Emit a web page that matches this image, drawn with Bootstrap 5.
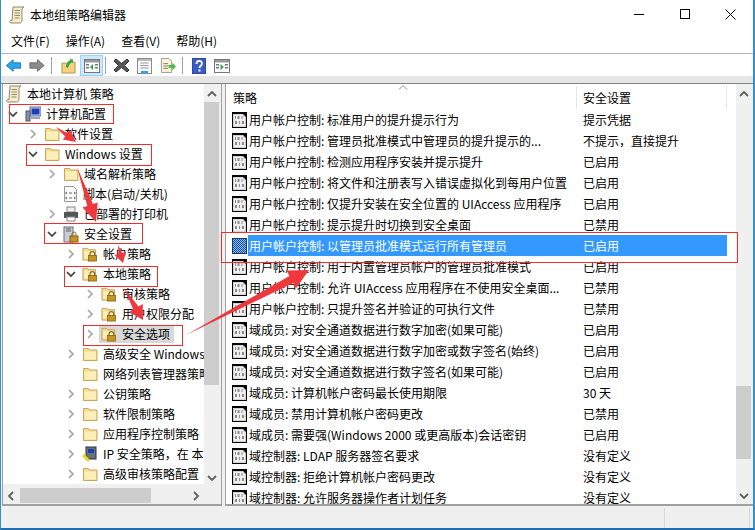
<!DOCTYPE html>
<html lang="zh">
<head>
<meta charset="utf-8">
<title>本地组策略编辑器</title>
<link href="https://cdn.jsdelivr.net/npm/bootstrap@5.3.0/dist/css/bootstrap.min.css" rel="stylesheet">
<style>
html,body{margin:0;height:530px;overflow:hidden;background:#fff}
body{font-family:"Noto Sans CJK SC","Liberation Sans",sans-serif;font-size:12px;line-height:1;color:#000}
.gw{width:755px;height:530px;border-left:1px solid #2c8fd8;border-right:2px solid #2c8fd8;border-bottom:2px solid #1f6fb0}
.gw-title{height:32px;padding:0 0 3px 8px;font-size:12px}
.gw-title .t{margin-left:5px}
.gw-ctrl{margin-left:auto;padding-right:17px;gap:34.500px}
.gw-menu{height:22px;padding:0 0 3px 10px;gap:16px;border-bottom:1px solid #b4b4c0}
.gw-tools{height:22px;padding:1px 0 0 4px}
.tm1{margin-left:1px}.tm2{margin-left:2px}.tm4{margin-left:4px}.tm6{margin-left:6px}.tm7{margin-left:7px}.tm8{margin-left:8px}.tm9{margin-left:9px}
.gw-band{height:8px;background:#e6e6e6;border-bottom:1px solid #808080}
.gw-sep{width:1px;height:17px;background:#a0a0a0}
.gw-on{background:#cce8ff;border:1px solid #99d1ff;width:23px;height:21px}
.gw-main{height:422px;gap:3px;padding:0 0 0 1px;background:#f0f0f0}
.pane-l{width:220px;flex:none;border:1px solid #a0a0a0;border-top:0;border-bottom:2px solid #a0a0a0;padding-right:1px}
.pane-r{width:528px;flex:none;border-left:1px solid #a0a0a0;border-bottom:2px solid #a0a0a0;padding-right:2px}
.tree-body{height:400px;flex:none;overflow:hidden}
.tree-scroll{width:201px;overflow:hidden;background:#fff}
.tree-row{height:20px;white-space:nowrap}
.tree-row svg{flex:none}
.lv0{padding-left:3px}.lv1{padding-left:5px}.lv2{padding-left:25px}.lv3{padding-left:44px}.lv4{padding-left:63px}.lv5{padding-left:82px}
.chev{width:10px;height:10px;flex:none;margin-right:6px}
.lv1 .chev{margin-right:7px}
.ico{margin-right:5px}
.nochev{width:16px;flex:none}
.sel{background:#d9d9d9;height:18px;padding:0 4px 0 2px;display:flex;align-items:center;margin-left:-2px}
.sb-v{width:15px;background:#f0f0f0;flex:none;padding-top:2px}
.sb-btn{height:16px;flex:none}
.sb-end{height:12px;flex:none}
.sb-track{flex:1 1 auto;min-height:0}
.sb-thumb{background:#cdcdcd}
.t2{height:283px}
.r-gap{height:284px}
.r-th{height:73px}
.sb-h{height:15px;background:#f0f0f0;margin:4px 0 1px 0;flex:none;width:201px}
.th1{width:131px;height:15px;background:#cdcdcd;margin-left:5px}
.list{width:510px;flex:none;background:#fff;overflow:hidden}
.lh{height:25px;position:relative}
.lh .c1{width:351px;padding-left:7px;border-right:1px solid #e5e5e5;height:23px;margin-top:2px}
.lh .c2{width:150px;padding-left:6px;border-right:1px solid #e5e5e5;height:23px;margin-top:2px}
.caret-up{position:absolute;left:172px;top:1px}
.lr{height:21.050px;white-space:nowrap}
.lr .c1{width:351px;padding-left:6px;overflow:hidden;flex:none}
.lr .c2{padding-left:6px;flex:none;width:150px}
.lr svg{flex:none;margin-right:2px}
.hit .c1 span{background:#3399ff;color:#fff;display:block;width:329px;line-height:21px;height:21px;padding-left:1px;margin-left:-1px}
.hit .c2{background:#3399ff;color:#fff;line-height:21px;height:21px}
.gw-status{height:22px;background:#f0f0f0}
.st-a{width:664px;border-right:1px solid #d8d8d8;height:20px;margin-top:2px}
.st-b{width:85px;border-right:1px solid #d8d8d8;height:20px;margin-top:2px}
.over{position:absolute;left:0;top:0;pointer-events:none}
</style>
</head>
<body>
<svg width="0" height="0" class="position-absolute">
<defs>
<pattern id="dith" width="2" height="2" patternUnits="userSpaceOnUse"><rect width="2" height="2" fill="#8dbdf0"/><rect width="1" height="1" fill="#1a4f98"/><rect x="1" y="1" width="1" height="1" fill="#1a4f98"/></pattern>
<symbol id="fld" viewBox="0 0 16 16"><path d="M1.500 2.500h5l1 1.500h7.500v10.500H1.500z" fill="#f6dd94" stroke="#c8a55a"/><path d="M2.500 5.500h11.500v8H2.500z" fill="#fcefb8"/></symbol>
<symbol id="lfld" viewBox="0 0 17 17"><path d="M1 2.500h5l1 1.500h7.500v11H1z" fill="#f6dd94" stroke="#c0a060"/><path d="M2.500 5.500h11v8h-11z" fill="#fcefb8"/><path d="M8.500 10.500v-2a2.500 2.500 0 0 1 5 0v2" fill="none" stroke="#8a6a20" stroke-width="1.300"/><rect x="7" y="10" width="8.500" height="6" fill="#c8961e" stroke="#7f5f14" stroke-width=".8"/></symbol>
<symbol id="doc" viewBox="0 0 15 16"><rect width="15" height="16" fill="#000"/><path d="M1 2h10l3 3v10H1z" fill="#d4d4d4"/><path d="M2 3h9v2h2v9H2z" fill="#efefef"/><path d="M3 4h1v3H3zM5.500 4h2v3h-2zM9.500 4h1v3h-1zM3 9h2v3H3zM7 9h1v3H7zM10 9h2v3h-2z" fill="#8c8c8c"/></symbol>
<symbol id="docblue" viewBox="0 0 15 16"><rect width="15" height="16" fill="#123a78"/><rect x="1" y="1" width="13" height="14" fill="url(#dith)"/></symbol>
<symbol id="cr" viewBox="0 0 10 10"><path d="M3 1l4 4-4 4" fill="none" stroke="#a6a6a6" stroke-width="1.700"/></symbol>
<symbol id="cd" viewBox="0 0 10 10"><path d="M1 3l4 4 4-4" fill="none" stroke="#404040" stroke-width="1.700"/></symbol>
<symbol id="scroll" viewBox="0 0 16 18"><path d="M4 1h11l-2 1.500V14c0 2-1 3-2.500 3H2c-1.500 0-2-2-.5-2.500H3z" fill="#f6ecc8" stroke="#8f8870"/><path d="M5.500 4.500h5.500M5.500 7h5.500M5.500 9.500h5.500M5.500 12h5" stroke="#8f8870"/></symbol>
</defs>
</svg>
<div class="gw d-flex flex-column position-relative">
  <div class="gw-title d-flex align-items-center">
    <svg width="16" height="18"><use href="#scroll"/></svg>
    <span class="t">本地组策略编辑器</span>
    <div class="gw-ctrl d-flex align-items-center">
      <svg width="11" height="11"><path d="M0 5.500h10" stroke="#000"/></svg>
      <svg width="11" height="11"><rect x=".5" y=".5" width="9" height="9" fill="none" stroke="#000"/></svg>
      <svg width="11" height="11"><path d="M.5.500l10 10M10.500.500l-10 10" stroke="#000"/></svg>
    </div>
  </div>
  <div class="gw-menu d-flex align-items-center">
    <span>文件(F)</span><span>操作(A)</span><span>查看(V)</span><span>帮助(H)</span>
  </div>
  <div class="gw-tools d-flex align-items-center">
    <svg width="16" height="15" viewBox="0 0 18 16" class="tm1"><path d="M.5 8L8 1.500V5h8.500v6H8v3.500z" fill="#2ea6ee" stroke="#1873b8"/></svg>
    <svg width="16" height="15" viewBox="0 0 18 16" class="tm7"><path d="M17 8L9.500 1.500V5H1v6h8.500v3.500z" fill="#8c8c8c" stroke="#666"/></svg>
    <div class="gw-sep tm6"></div>
    <svg width="15" height="16" viewBox="0 0 16 17" class="tm9"><path d="M1 5.500h5l1-1h8v11.500H1z" fill="#f3d27e" stroke="#b89348"/><path d="M5 9c1-4 3-6 5-7l-1-1 4 .5-.5 4-1-1c-2 1-3 3-4 6z" fill="#2fa84a"/></svg>
    <div class="gw-on d-flex align-items-center justify-content-center tm4">
      <svg width="16" height="14"><rect x=".5" y=".5" width="15" height="13" fill="#fff" stroke="#777"/><rect x="1" y="1" width="14" height="2.500" fill="#999"/><path d="M2 5h3v1.500H2zM2 8h3v1.500H2zM11 5h3v1.500h-3zM11 8h3v1.500h-3z" fill="#777"/><path d="M9 5v6L6 8z" fill="#2fa84a"/></svg>
    </div>
    <div class="gw-sep tm2"></div>
    <svg width="17" height="17" class="tm7"><path d="M3 2l5.500 4.500L14 2l2 2-4.500 4.500L16 13l-2 2-5.500-4.500L3 15l-2-2 4.500-4.500L1 4z" fill="#555" stroke="#333"/></svg>
    <svg width="15" height="16" class="tm7"><rect x=".5" y=".5" width="14" height="15" fill="#f8f8f8" stroke="#8a8a8a"/><rect x="1" y="1" width="13" height="2" fill="#bbb"/><path d="M3.500 5h8M3.500 7.500h8M3.500 10h8" stroke="#99a"/><rect x="4" y="13" width="7" height="2" fill="#2ea6ee"/></svg>
    <svg width="16" height="15" viewBox="0 0 17 16" class="tm8"><path d="M1.500.500h8l3 3v12h-11z" fill="#fbf3d2" stroke="#999"/><path d="M3.500 6h5M3.500 8.500h5M3.500 11h5" stroke="#777"/><path d="M9 7.500h4V5l4 4-4 4v-2.500H9z" fill="#4cb848"/></svg>
    <div class="gw-sep tm6"></div>
    <svg width="14" height="16" class="tm9"><rect width="14" height="16" fill="#2e48a8"/><rect x="1" y="1" width="12" height="14" fill="#3a5cc4"/><path d="M4.500 6c0-4 5.500-4 5.500-.5C10 8 7.500 7.500 7.500 10" fill="none" stroke="#fff" stroke-width="1.800"/><rect x="6.500" y="11.500" width="2" height="2" fill="#fff"/></svg>
    <svg width="16" height="14" class="tm8"><rect x=".5" y=".5" width="15" height="13" fill="#fff" stroke="#777"/><rect x="1" y="1" width="14" height="2.500" fill="#999"/><path d="M2 5h3v1.500H2zM2 8h3v1.500H2zM11 5h3v1.500h-3zM11 8h3v1.500h-3z" fill="#777"/><path d="M6.500 5v6L10 8z" fill="#2fa84a"/></svg>
  </div>
  <div class="gw-band"></div>
  <div class="gw-main d-flex">
    <div class="pane-l d-flex flex-column">
      <div class="tree-body d-flex">
        <div class="tree-scroll">
          <div class="tree-row d-flex align-items-center lv0"><svg class="ico" width="16" height="18"><use href="#scroll"/></svg><span>本地计算机 策略</span></div>
          <div class="tree-row d-flex align-items-center lv1"><svg class="chev"><use href="#cd"/></svg><svg class="ico" width="16" height="16"><rect x="5" y="1" width="11" height="9" fill="#cfd6e6" stroke="#5a6a90"/><rect x="6.500" y="2.500" width="8" height="6" fill="#1a3fb8"/><rect x="1" y="5" width="4" height="10" fill="#7d90b0" stroke="#556"/><rect x="6" y="11" width="9" height="2" fill="#9aa6bc"/></svg><span>计算机配置</span></div>
          <div class="tree-row d-flex align-items-center lv2"><svg class="chev"><use href="#cr"/></svg><svg class="ico" width="16" height="16"><use href="#fld"/></svg><span>软件设置</span></div>
          <div class="tree-row d-flex align-items-center lv2"><svg class="chev"><use href="#cd"/></svg><svg class="ico" width="16" height="16"><use href="#fld"/></svg><span>Windows 设置</span></div>
          <div class="tree-row d-flex align-items-center lv3"><svg class="chev"><use href="#cr"/></svg><svg class="ico" width="16" height="16"><use href="#fld"/></svg><span>域名解析策略</span></div>
          <div class="tree-row d-flex align-items-center lv3"><span class="nochev"></span><svg class="ico" width="15" height="16"><path d="M1.500.500h9l3 3v12h-12z" fill="#fafafa" stroke="#999"/><path d="M4 6l-1.500 1L4 8M11 6l1.500 1L11 8M4 11l-1.500 1L4 13M11 11l1.500 1L11 13M6 7h3M6 12h3" fill="none" stroke="#666"/></svg><span>脚本(启动/关机)</span></div>
          <div class="tree-row d-flex align-items-center lv3"><svg class="chev"><use href="#cr"/></svg><svg class="ico" width="16" height="16"><rect x="4" y="1" width="8" height="5" fill="#eee" stroke="#888"/><rect x="1" y="6" width="14" height="6" fill="#555"/><rect x="4" y="11" width="8" height="4" fill="#fff" stroke="#888"/></svg><span>已部署的打印机</span></div>
          <div class="tree-row d-flex align-items-center lv3"><svg class="chev"><use href="#cd"/></svg><svg class="ico" width="16" height="17"><rect x="1" y="1" width="9" height="15" fill="#c8ccd6" stroke="#6a7080"/><path d="M3 3h5M3 5h5" stroke="#5a6070"/><path d="M9 10V8a2 2 0 0 1 4 0v2" fill="none" stroke="#8a6a20"/><rect x="7" y="10" width="8" height="6" fill="#c8961e" stroke="#7f5f14"/></svg><span>安全设置</span></div>
          <div class="tree-row d-flex align-items-center lv4"><svg class="chev"><use href="#cr"/></svg><svg class="ico" width="16" height="16"><use href="#lfld"/></svg><span>帐户策略</span></div>
          <div class="tree-row d-flex align-items-center lv4"><svg class="chev"><use href="#cd"/></svg><svg class="ico" width="16" height="16"><use href="#lfld"/></svg><span>本地策略</span></div>
          <div class="tree-row d-flex align-items-center lv5"><svg class="chev"><use href="#cr"/></svg><svg class="ico" width="16" height="16"><use href="#lfld"/></svg><span>审核策略</span></div>
          <div class="tree-row d-flex align-items-center lv5"><svg class="chev"><use href="#cr"/></svg><svg class="ico" width="16" height="16"><use href="#lfld"/></svg><span>用户权限分配</span></div>
          <div class="tree-row d-flex align-items-center lv5"><svg class="chev"><use href="#cr"/></svg><div class="sel"><svg class="ico" width="16" height="16"><use href="#lfld"/></svg><span>安全选项</span></div></div>
          <div class="tree-row d-flex align-items-center lv4"><svg class="chev"><use href="#cr"/></svg><svg class="ico" width="16" height="16"><use href="#fld"/></svg><span>高级安全 Windows 防火墙</span></div>
          <div class="tree-row d-flex align-items-center lv4"><span class="nochev"></span><svg class="ico" width="16" height="16"><use href="#fld"/></svg><span>网络列表管理器策略</span></div>
          <div class="tree-row d-flex align-items-center lv4"><svg class="chev"><use href="#cr"/></svg><svg class="ico" width="16" height="16"><use href="#fld"/></svg><span>公钥策略</span></div>
          <div class="tree-row d-flex align-items-center lv4"><svg class="chev"><use href="#cr"/></svg><svg class="ico" width="16" height="16"><use href="#fld"/></svg><span>软件限制策略</span></div>
          <div class="tree-row d-flex align-items-center lv4"><svg class="chev"><use href="#cr"/></svg><svg class="ico" width="16" height="16"><use href="#fld"/></svg><span>应用程序控制策略</span></div>
          <div class="tree-row d-flex align-items-center lv4"><svg class="chev"><use href="#cr"/></svg><svg class="ico" width="16" height="16"><rect x="4" y="1" width="10" height="12" fill="#6a6f78" stroke="#333"/><rect x="6" y="3" width="6" height="4" fill="#1a3fb8"/><path d="M1 9l6 6" stroke="#e8d820" stroke-width="3"/></svg><span>IP 安全策略，在 本地计算机</span></div>
          <div class="tree-row d-flex align-items-center lv4"><svg class="chev"><use href="#cr"/></svg><svg class="ico" width="16" height="16"><use href="#fld"/></svg><span>高级审核策略配置</span></div>
        </div>
        <div class="sb-v d-flex flex-column">
          <div class="sb-btn d-flex align-items-center justify-content-center"><svg width="10" height="8"><path d="M1 6l4-4 4 4" fill="none" stroke="#606060" stroke-width="1.800"/></svg></div>
          <div class="sb-track d-flex flex-column"><div class="sb-thumb t2"></div></div>
          <div class="sb-end d-flex align-items-center justify-content-center"><svg width="10" height="8"><path d="M1 2l4 4 4-4" fill="none" stroke="#606060" stroke-width="1.800"/></svg></div>
        </div>
      </div>
      <div class="sb-h d-flex align-items-center">
        <svg width="8" height="10" class="ms-1"><path d="M6 1L2 5l4 4" fill="none" stroke="#606060" stroke-width="1.800"/></svg>
        <div class="th1"></div>
        <svg width="8" height="10" class="ms-auto me-1"><path d="M2 1l4 4-4 4" fill="none" stroke="#606060" stroke-width="1.800"/></svg>
      </div>
    </div>
    <div class="pane-r d-flex">
      <div class="list">
        <div class="lh d-flex">
          <div class="c1 d-flex align-items-center">策略</div>
          <div class="c2 d-flex align-items-center">安全设置</div>
          <svg class="caret-up" width="10" height="5"><path d="M1 4.500l4-4 4 4" fill="none" stroke="#8a8a8a"/></svg>
        </div>
        <div class="lr d-flex align-items-center"><div class="c1 d-flex align-items-center"><svg width="15" height="16"><use href="#doc"/></svg><span>用户帐户控制: 标准用户的提升提示行为</span></div><div class="c2">提示凭据</div></div>
        <div class="lr d-flex align-items-center"><div class="c1 d-flex align-items-center"><svg width="15" height="16"><use href="#doc"/></svg><span>用户帐户控制: 管理员批准模式中管理员的提升提示的...</span></div><div class="c2">不提示，直接提升</div></div>
        <div class="lr d-flex align-items-center"><div class="c1 d-flex align-items-center"><svg width="15" height="16"><use href="#doc"/></svg><span>用户帐户控制: 检测应用程序安装并提示提升</span></div><div class="c2">已启用</div></div>
        <div class="lr d-flex align-items-center"><div class="c1 d-flex align-items-center"><svg width="15" height="16"><use href="#doc"/></svg><span>用户帐户控制: 将文件和注册表写入错误虚拟化到每用户位置</span></div><div class="c2">已启用</div></div>
        <div class="lr d-flex align-items-center"><div class="c1 d-flex align-items-center"><svg width="15" height="16"><use href="#doc"/></svg><span>用户帐户控制: 仅提升安装在安全位置的 UIAccess 应用程序</span></div><div class="c2">已启用</div></div>
        <div class="lr d-flex align-items-center"><div class="c1 d-flex align-items-center"><svg width="15" height="16"><use href="#doc"/></svg><span>用户帐户控制: 提示提升时切换到安全桌面</span></div><div class="c2">已禁用</div></div>
        <div class="lr hit d-flex align-items-center"><div class="c1 d-flex align-items-center"><svg width="15" height="16"><use href="#docblue"/></svg><span>用户帐户控制: 以管理员批准模式运行所有管理员</span></div><div class="c2">已启用</div></div>
        <div class="lr d-flex align-items-center"><div class="c1 d-flex align-items-center"><svg width="15" height="16"><use href="#doc"/></svg><span>用户帐户控制: 用于内置管理员帐户的管理员批准模式</span></div><div class="c2">已启用</div></div>
        <div class="lr d-flex align-items-center"><div class="c1 d-flex align-items-center"><svg width="15" height="16"><use href="#doc"/></svg><span>用户帐户控制: 允许 UIAccess 应用程序在不使用安全桌面...</span></div><div class="c2">已禁用</div></div>
        <div class="lr d-flex align-items-center"><div class="c1 d-flex align-items-center"><svg width="15" height="16"><use href="#doc"/></svg><span>用户帐户控制: 只提升签名并验证的可执行文件</span></div><div class="c2">已禁用</div></div>
        <div class="lr d-flex align-items-center"><div class="c1 d-flex align-items-center"><svg width="15" height="16"><use href="#doc"/></svg><span>域成员: 对安全通道数据进行数字加密(如果可能)</span></div><div class="c2">已启用</div></div>
        <div class="lr d-flex align-items-center"><div class="c1 d-flex align-items-center"><svg width="15" height="16"><use href="#doc"/></svg><span>域成员: 对安全通道数据进行数字加密或数字签名(始终)</span></div><div class="c2">已启用</div></div>
        <div class="lr d-flex align-items-center"><div class="c1 d-flex align-items-center"><svg width="15" height="16"><use href="#doc"/></svg><span>域成员: 对安全通道数据进行数字签名(如果可能)</span></div><div class="c2">已启用</div></div>
        <div class="lr d-flex align-items-center"><div class="c1 d-flex align-items-center"><svg width="15" height="16"><use href="#doc"/></svg><span>域成员: 计算机帐户密码最长使用期限</span></div><div class="c2">30 天</div></div>
        <div class="lr d-flex align-items-center"><div class="c1 d-flex align-items-center"><svg width="15" height="16"><use href="#doc"/></svg><span>域成员: 禁用计算机帐户密码更改</span></div><div class="c2">已禁用</div></div>
        <div class="lr d-flex align-items-center"><div class="c1 d-flex align-items-center"><svg width="15" height="16"><use href="#doc"/></svg><span>域成员: 需要强(Windows 2000 或更高版本)会话密钥</span></div><div class="c2">已启用</div></div>
        <div class="lr d-flex align-items-center"><div class="c1 d-flex align-items-center"><svg width="15" height="16"><use href="#doc"/></svg><span>域控制器: LDAP 服务器签名要求</span></div><div class="c2">没有定义</div></div>
        <div class="lr d-flex align-items-center"><div class="c1 d-flex align-items-center"><svg width="15" height="16"><use href="#doc"/></svg><span>域控制器: 拒绝计算机帐户密码更改</span></div><div class="c2">没有定义</div></div>
        <div class="lr d-flex align-items-center"><div class="c1 d-flex align-items-center"><svg width="15" height="16"><use href="#doc"/></svg><span>域控制器: 允许服务器操作者计划任务</span></div><div class="c2">没有定义</div></div>
      </div>
      <div class="sb-v d-flex flex-column ms-auto">
        <div class="sb-btn d-flex align-items-center justify-content-center"><svg width="10" height="8"><path d="M1 6l4-4 4 4" fill="none" stroke="#606060" stroke-width="1.800"/></svg></div>
        <div class="sb-track d-flex flex-column"><div class="r-gap"></div><div class="sb-thumb r-th"></div></div>
        <div class="sb-btn d-flex align-items-center justify-content-center"><svg width="10" height="8"><path d="M1 2l4 4 4-4" fill="none" stroke="#606060" stroke-width="1.800"/></svg></div>
      </div>
    </div>
  </div>
  <div class="gw-status d-flex">
    <div class="st-a"></div><div class="st-b"></div>
  </div>
  <svg class="over" width="755" height="530" fill="none">
    <g stroke="#f02c2c" stroke-width="1">
      <rect x="8.500" y="104.500" width="104" height="19"/>
      <rect x="25.500" y="144.500" width="125" height="21"/>
      <rect x="43.500" y="223.500" width="98" height="20"/>
      <rect x="63.500" y="266.500" width="93" height="20"/>
      <rect x="82.500" y="325.500" width="99" height="20"/>
      <rect x="220.500" y="232.500" width="516" height="30"/>
    </g>
    <g fill="#f0383c">
      <polygon points="55,127 64.200,136.400 61.800,139.600 75,142 69,130 66.600,133.200"/>
      <polygon points="76,167 86.300,206 81.500,207.600 95,222 96.700,202.400 91.900,204"/>
      <polygon points="117,245 117.400,253.900 113.500,255 122,263 125.100,251.800 121.200,252.900"/>
      <polygon points="123,288 132.300,309.500 128,312.100 142,320 141.800,303.900 137.500,306.500"/>
      <polygon points="185,335 292.200,282.900 295,288.300 308,270 285.600,270.500 288.400,275.900"/>
    </g>
  </svg>
</div>
</body>
</html>
